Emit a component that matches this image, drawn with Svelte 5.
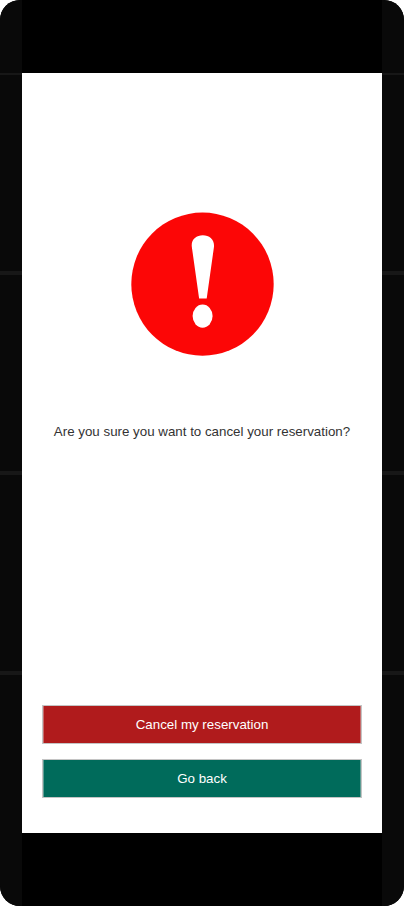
<script>
  const actions = [
    { label: 'Cancel my reservation', kind: 'danger' },
    { label: 'Go back', kind: 'primary' }
  ];
</script>

<div class="device">
  <div class="rail"></div>
  <div class="body">
    <main class="screen">
      <svg class="warning" viewBox="131 212 143 144" aria-hidden="true">
        <ellipse cx="202.5" cy="284.1" rx="71.2" ry="71.6" fill="#fc0606" />
        <path d="M199.1 298.4 L191.9 247.5 C190.6 239.8 196 235.2 202.8 235.2 C209.8 235.2 215 239.8 213.9 247.5 L206.7 298.4 Z" fill="#fff" />
        <ellipse cx="202.6" cy="316.1" rx="10" ry="11.6" fill="#fff" />
      </svg>
      <p>Are you sure you want to cancel your reservation?</p>
      <div class="actions">
        {#each actions as action}
          <button class={action.kind} type="button">{action.label}</button>
        {/each}
      </div>
    </main>
  </div>
  <div class="rail"></div>
</div>

<style>
  :global(body) {
    background: #fff;
  }
  .device {
    display: flex;
    width: 404px;
    height: 906px;
    border-radius: 20px;
    overflow: hidden;
    background: #000;
  }
  .rail {
    width: 22px;
    background:
      linear-gradient(#171717, #171717) 0 73px / 100% 2px no-repeat,
      linear-gradient(#171717, #171717) 0 271px / 100% 4px no-repeat,
      linear-gradient(#171717, #171717) 0 471px / 100% 4px no-repeat,
      linear-gradient(#171717, #171717) 0 671px / 100% 4px no-repeat,
      #090909;
  }
  .body {
    width: 360px;
    box-sizing: border-box;
    padding: 73px 0;
  }
  .screen {
    box-sizing: border-box;
    height: 760px;
    padding: 139px 20px 35px;
    display: flex;
    flex-direction: column;
    align-items: center;
    background: #fff;
    font-family: "Liberation Sans", Arial, sans-serif;
    font-size: 13.333px;
  }
  .warning {
    display: block;
    width: 143px;
    height: 144px;
    flex: none;
  }
  p {
    margin: 67px 0 0;
    line-height: 18px;
    color: #333;
    white-space: nowrap;
  }
  .actions {
    width: 100%;
    margin-top: auto;
    display: flex;
    flex-direction: column;
    gap: 15px;
  }
  button {
    height: 39px;
    padding: 0;
    border: 1px solid #c4c4c4;
    font: inherit;
    color: #fff;
  }
  .danger {
    background: #b01b1c;
    box-shadow: inset 1px 0 #c66b6b, inset -1px 0 #c66b6b;
  }
  .primary {
    background: #006b5b;
    box-shadow: inset 1px 0 #5d9c93, inset -1px 0 #5d9c93;
  }
</style>
